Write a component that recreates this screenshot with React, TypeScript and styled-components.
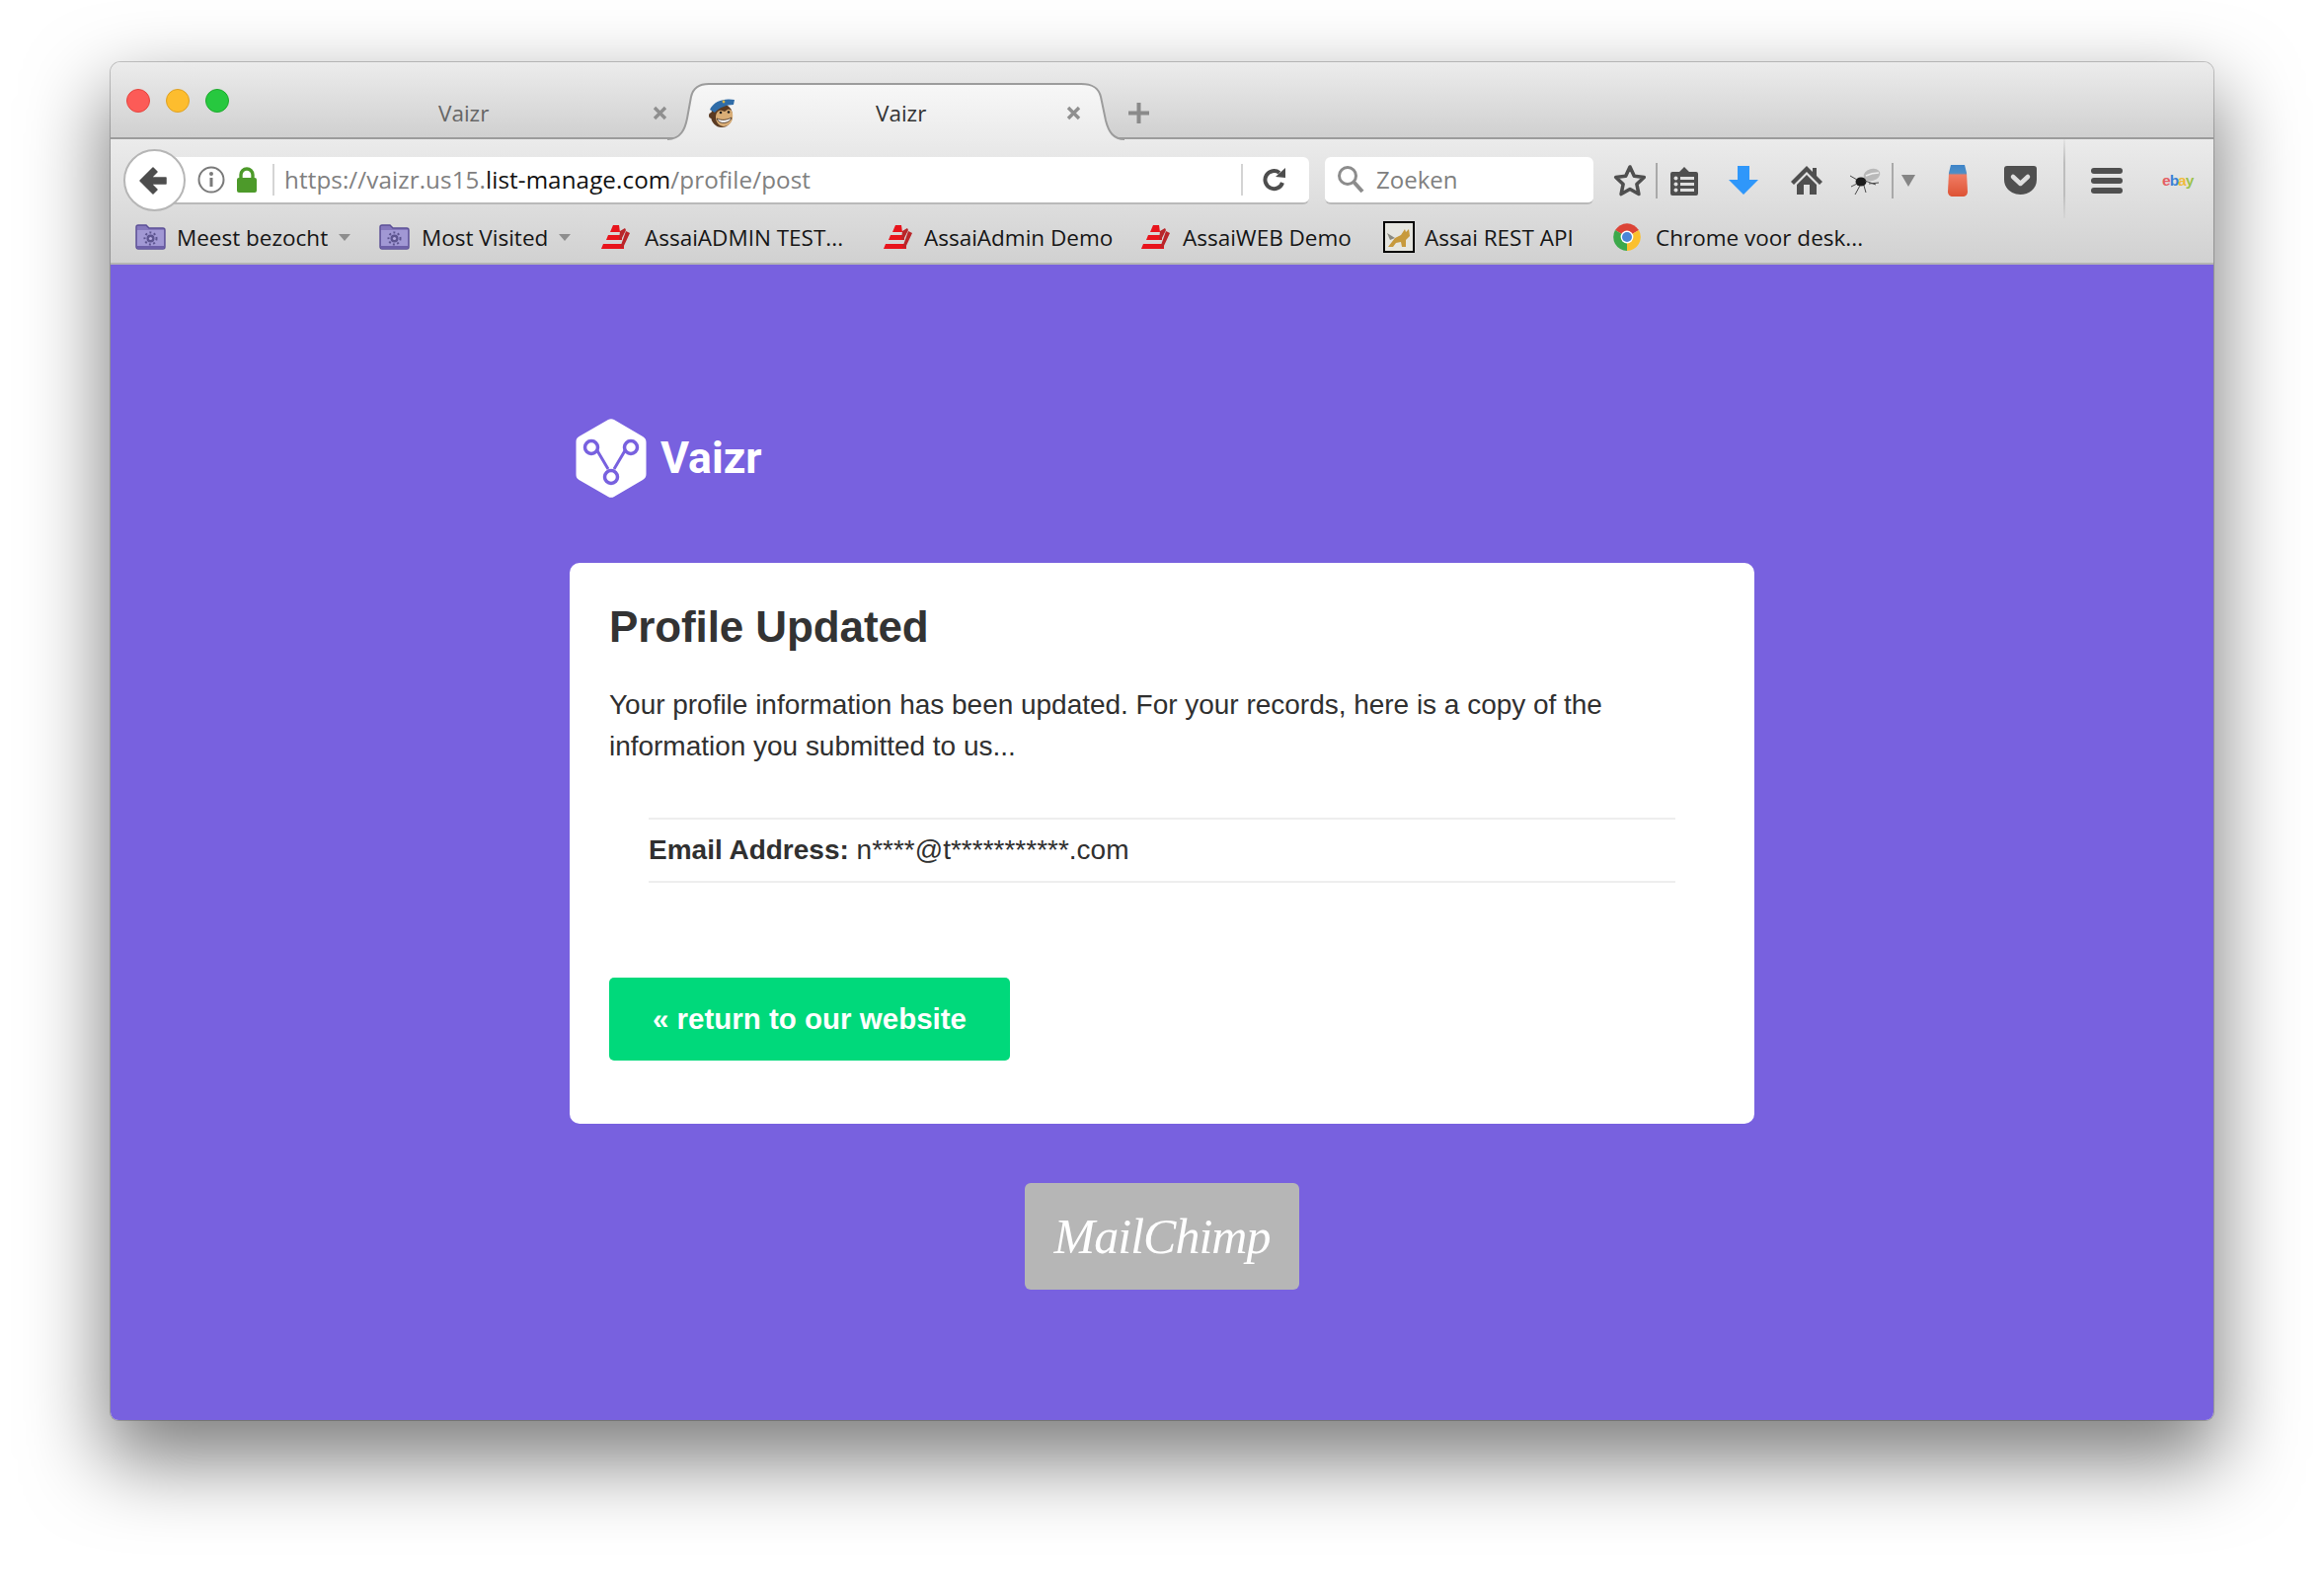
import React from "react";
import styled, { createGlobalStyle } from "styled-components";

const Global = createGlobalStyle`
  html, body { margin: 0; padding: 0; background: #fff; }
  body { font-family: "Liberation Sans", Arial, sans-serif; height: 1598px; overflow: hidden; }
`;

const Stage = styled.div`
  padding: 63px 0 0 112px;
  width: 2354px;
  height: 1598px;
  box-sizing: border-box;
`;
const Win = styled.div`
  width: 2130px;
  height: 1375px;
  display: flex;
  flex-direction: column;
  border-radius: 10px 10px 8px 8px;
  overflow: hidden;
  box-shadow: 0 36px 80px 6px rgba(0, 0, 0, 0.5), 0 0 0 1px rgba(0, 0, 0, 0.2);
`;
const Shell = styled.div`
  position: relative;
`;
const TabStrip = styled.div`
  height: 76px;
  flex: none;
  display: flex;
  align-items: flex-start;
  background: linear-gradient(#ececec, #d0d0d0);
  border-bottom: 2px solid #9c9c9c;
  font-family: "Open Sans", sans-serif;
`;
const Lights = styled.div`
  display: flex;
  gap: 16px;
  margin: 27px 0 0 16px;
  width: 112px;
  flex: none;
`;
const Light = styled.span<{ $c: string; $b: string }>`
  width: 24px;
  height: 24px;
  border-radius: 50%;
  box-sizing: border-box;
  background: ${p => p.$c};
  border: 1px solid ${p => p.$b};
`;
const BackTab = styled.div`
  width: 436px;
  height: 78px;
  flex: none;
  display: flex;
  align-items: center;
  padding-top: 24px;
  box-sizing: border-box;
  font-size: 22.5px;
  color: #666;
`;
const TabTitle = styled.span<{ $ml: number; $w: number }>`
  margin-left: ${p => p.$ml}px;
  width: ${p => p.$w}px;
  flex: none;
  white-space: nowrap;
`;
const FrontTab = styled.div`
  position: relative;
  width: 463px;
  height: 59px;
  margin-top: 21px;
  flex: none;
  display: flex;
  align-items: center;
  padding-top: 2px;
  box-sizing: border-box;
  font-size: 22.5px;
  color: #333;
  z-index: 1;
`;
const TabShape = styled.svg`
  position: absolute;
  left: 0;
  top: 0;
  z-index: -1;
`;
const Plus = styled.svg`
  margin: 41px 0 0 4px;
  flex: none;
`;
const ToolArea = styled.div`
  background: linear-gradient(#ebebeb, #d1d1d1);
  border-bottom: 2px solid #b4b4b4;
  position: relative;
  flex: none;
`;
const NavBar = styled.div`
  height: 69px;
  display: flex;
  align-items: center;
  padding-left: 13px;
  padding-top: 14px;
  box-sizing: border-box;
`;
const BackBtn = styled.div`
  width: 63px;
  height: 63px;
  box-sizing: border-box;
  border-radius: 50%;
  border: 2px solid #b6b6b6;
  background: #fff;
  display: flex;
  align-items: center;
  justify-content: center;
  flex: none;
  position: relative;
  z-index: 1;
`;
const Field = styled.div<{ $w: number; $ml: number }>`
  width: ${p => p.$w}px;
  margin-left: ${p => p.$ml}px;
  height: 48px;
  background: #fff;
  border-radius: 6px;
  border-bottom: 2px solid #b9b9b9;
  box-sizing: border-box;
  display: flex;
  align-items: center;
  flex: none;
  font-family: "Open Sans", sans-serif;
  font-size: 24px;
  color: #808080;
`;
const UrlText = styled.span`
  margin-left: 10px;
  width: 969px;
  flex: none;
  white-space: nowrap;
  font-size: 24.2px;
  letter-spacing: 0.1px;
  b { font-weight: 400; color: #111; }
`;
const Sep = styled.span<{ $h: number; $ml: number; $c?: string }>`
  width: 2px;
  height: ${p => p.$h}px;
  margin-left: ${p => p.$ml}px;
  background: ${p => p.$c || "#d4d4d4"};
  flex: none;
`;
const Ico = styled.svg<{ $ml?: number }>`
  margin-left: ${p => p.$ml || 0}px;
  flex: none;
  display: block;
`;
const BackArrow = styled.svg`
  margin-right: 4px;
  flex: none;
`;
const TallSep = styled.span`
  width: 2px;
  height: 80px;
  margin-left: 27px;
  margin-top: -4px;
  flex: none;
  background: linear-gradient(rgba(170,170,170,.1), #bdbdbd 30%, #bdbdbd 70%, rgba(170,170,170,.1));
`;
const Ebay = styled.span`
  margin-left: 40px;
  font: 700 15.5px "Liberation Sans", sans-serif;
  letter-spacing: -1px;
  flex: none;
  opacity: .75;
`;
const EbayL = styled.span<{ $c: string }>`
  color: ${p => p.$c};
`;
const MarksBar = styled.div`
  height: 56px;
  display: flex;
  align-items: center;
  font-family: "Open Sans", sans-serif;
  font-size: 22.5px;
  color: #161616;
  padding-left: 25px;
  padding-top: 4px;
  box-sizing: border-box;
`;
const MarkText = styled.span<{ $ml: number; $w: number }>`
  margin-left: ${p => p.$ml}px;
  width: ${p => p.$w}px;
  flex: none;
  white-space: nowrap;
`;
const Page = styled.main`
  flex: 1;
  background: #7861df;
  display: flex;
  flex-direction: column;
  align-items: center;
  padding-top: 155px;
`;
const LogoRow = styled.div`
  width: 1188px;
  height: 82px;
  display: flex;
  align-items: center;
  gap: 14px;
  font-family: Roboto, sans-serif;
  font-weight: 700;
  font-size: 44.5px;
  color: #fff;
`;
const Card = styled.section`
  width: 1200px;
  height: 568px;
  margin-top: 65px;
  background: #fff;
  border-radius: 10px;
  padding: 40px 40px 0;
  box-sizing: border-box;
  color: #303030;
`;
const Title = styled.h1`
  margin: 0;
  font-size: 44px;
  line-height: 50px;
  font-weight: 700;
  letter-spacing: -0.1px;
  color: #333;
`;
const Para = styled.p`
  margin: 33px 0 0;
  font-size: 28px;
  line-height: 42px;
  width: 1040px;
  letter-spacing: -0.02px;
`;
const Row = styled.div`
  width: 1040px;
  height: 66px;
  margin: 51px 0 0 40px;
  box-sizing: border-box;
  border-top: 2px solid #eeeeee;
  border-bottom: 2px solid #eeeeee;
  display: flex;
  align-items: center;
  font-size: 28px;
  white-space: pre;
  b { font-weight: 700; }
`;
const Action = styled.a`
  margin-top: 96px;
  width: 406px;
  height: 84px;
  border-radius: 5px;
  background: #00d97b;
  color: #fff;
  font-size: 29.5px;
  font-weight: 700;
  display: flex;
  align-items: center;
  justify-content: center;
`;
const Badge = styled.div`
  margin-top: 60px;
  width: 278px;
  height: 108px;
  border-radius: 6px;
  background: #b6b6b6;
  color: #fff;
  display: flex;
  align-items: center;
  justify-content: center;
  font-family: "Liberation Serif", serif;
  font-style: italic;
  font-size: 50px;
  letter-spacing: -1px;
`;

const Folder = ({ ml = 0 }: { ml?: number }) => (
  <Ico $ml={ml} width="31" height="28" viewBox="0 0 31 28">
    <path d="M1 4a2 2 0 0 1 2-2h8l3 3h14a2 2 0 0 1 2 2v17a2 2 0 0 1-2 2H3a2 2 0 0 1-2-2z" fill="#8578bd" stroke="#5b4f96" strokeWidth="1.4" />
    <rect x="2" y="7" width="27" height="18" fill="#a198d4" />
    <rect x="2" y="23" width="27" height="3" fill="#6d60a8" />
    <circle cx="15.5" cy="15.500" r="4" fill="#5d5590" />
    <circle cx="15.5" cy="15.500" r="6" fill="none" stroke="#5d5590" strokeWidth="2" strokeDasharray="2 2.4" />
    <circle cx="15.5" cy="15.500" r="1.6" fill="#b5abe0" />
  </Ico>
);
const Caret = ({ ml }: { ml: number }) => (
  <Ico $ml={ml} width="12" height="7" viewBox="0 0 12 7"><path d="M0 0h12L6 7z" fill="#8e8e8e" /></Ico>
);
const Assai = ({ ml }: { ml: number }) => (
  <Ico $ml={ml} width="31" height="26" viewBox="0 0 31 26">
    <path d="M12 1h6l1 7H9z" fill="#e8141c" />
    <path d="M7 11h14v5H5z" fill="#e8141c" />
    <path d="M2 20h21v5H0z" fill="#e8141c" />
    <path d="M19 7l5-3 1 2-5 10h-2zM25 7l4 2-7 15h-3z" fill="#b9262a" />
  </Ico>
);
const Tomcat = ({ ml }: { ml: number }) => (
  <Ico $ml={ml} width="32" height="32" viewBox="0 0 32 32">
    <rect x="1" y="1" width="30" height="30" fill="#e6e6e0" stroke="#000" strokeWidth="2" />
    <path d="M5 26l7-9 6-3 4-6 1 3 3-3 1 7-4 4v7h-4l-1-5-5 1-3 4z" fill="#c79a3c" />
    <path d="M4 12l8 5-5 2z" fill="#8a8a80" />
  </Ico>
);
const ChromeIco = ({ ml }: { ml: number }) => (
  <Ico $ml={ml} width="28" height="28" viewBox="0 0 28 28">
    <path d="M14 14L2 7.1A14 14 0 0 1 26 7.1z" fill="#dc4437" />
    <path d="M14 14l12-6.9A14 14 0 0 1 14 28z" fill="#fbc02d" />
    <path d="M14 14v14A14 14 0 0 1 2 7.1z" fill="#3ca94b" />
    <circle cx="14" cy="14" r="6.4" fill="#fff" />
    <circle cx="14" cy="14" r="5" fill="#4a86d8" />
  </Ico>
);
const TabClose = () => (
  <Ico width="15" height="15" viewBox="0 0 15 15"><path d="M2 2l11 11M13 2L2 13" stroke="#8f8f8f" strokeWidth="3.4" /></Ico>
);

export default function App() {
  return (
    <Stage>
      <Global />
      <Win>
        <Shell>
          <TabStrip>
            <Lights>
              <Light $c="#fc5b57" $b="#e5453f" />
              <Light $c="#fdbd2e" $b="#dea123" />
              <Light $c="#27c83f" $b="#1daa2c" />
            </Lights>
            <BackTab>
              <TabTitle $ml={204} $w={217}>Vaizr</TabTitle>
              <TabClose />
            </BackTab>
            <FrontTab>
              <TabShape width="463" height="59" viewBox="0 0 463 59">
                <defs>
                  <linearGradient id="tabfill" x1="0" y1="0" x2="0" y2="1">
                    <stop offset="0" stopColor="#f7f7f7" />
                    <stop offset="1" stopColor="#ebebeb" />
                  </linearGradient>
                </defs>
                <path d="M0 59V57C14 57 18 46 20 36L24 14C26 5 32 1 42 1H419C432 1 437 6 439 14L444 38C447 50 452 57 463 57V59z" fill="url(#tabfill)" />
                <path d="M0 57C14 57 18 46 20 36L24 14C26 5 32 1 42 1H419C432 1 437 6 439 14L444 38C447 50 452 57 463 57" fill="none" stroke="#9c9c9c" strokeWidth="2" />
              </TabShape>
              <Ico $ml={42} width="28" height="31" viewBox="0 0 28 31">
                <ellipse cx="13" cy="18" rx="11" ry="12" fill="#5a3a22" />
                <circle cx="3" cy="18" r="3" fill="#5a3a22" />
                <path d="M1 12C5 3 16 0 26 2L25 7C18 7 10 10 6 15z" fill="#2f6ca8" />
                <circle cx="15" cy="4" r="1.4" fill="#d8b84a" />
                <path d="M7 20c0-5 3-8 6-7l3 1 3-2c4-1 6 3 5 9-1 5-5 8-9 8s-8-4-8-9z" fill="#d9ad76" />
                <circle cx="12" cy="15" r="1.3" fill="#1c1c1c" />
                <circle cx="20" cy="14.500" r="1.3" fill="#1c1c1c" />
                <path d="M8 21c4 2 10 2 15-1-1 6-13 8-15 1z" fill="#fff" stroke="#3a2415" strokeWidth=".8" />
              </Ico>
              <TabTitle $ml={141} $w={193}>Vaizr</TabTitle>
              <TabClose />
            </FrontTab>
            <Plus width="21" height="21" viewBox="0 0 21 21"><path d="M8.5 0h4v8.500h8.500v4h-8.500v8.500h-4v-8.500H0v-4h8.500z" fill="#8a8a8a" /></Plus>
          </TabStrip>
          <ToolArea>
            <NavBar>
              <BackBtn>
                <BackArrow width="30" height="30" viewBox="0 0 30 30"><path d="M15 2L2 15l13 13 4-4-6-6h15v-6H13l6-6z" fill="#4d4d4d" stroke="#4d4d4d" strokeWidth="1.500" strokeLinejoin="round" /></BackArrow>
              </BackBtn>
              <Field $w={1158} $ml={-20}>
                <Ico $ml={32} width="28" height="28" viewBox="0 0 28 28">
                  <circle cx="14" cy="14" r="12.500" fill="none" stroke="#7a7a7a" strokeWidth="2" />
                  <circle cx="14" cy="8" r="2" fill="#7a7a7a" />
                  <rect x="12.500" y="12" width="3" height="9" fill="#7a7a7a" />
                </Ico>
                <Ico $ml={11} width="22" height="26" viewBox="0 0 22 26">
                  <path d="M5 12V8a6 6 0 0 1 12 0v4" fill="none" stroke="#4d9a2a" strokeWidth="3.400" />
                  <rect x="1" y="11" width="20" height="15" rx="2" fill="#4d9a2a" />
                </Ico>
                <Sep $h={32} $ml={15} />
                <UrlText>https://vaizr.us15.<b>list-manage.com</b>/profile/post</UrlText>
                <Sep $h={32} $ml={0} />
                <Ico $ml={20} width="24" height="26" viewBox="0 0 24 26">
                  <path d="M20 16a9 9 0 1 1-3-10" fill="none" stroke="#4d4d4d" strokeWidth="4" />
                  <path d="M13 10L23 1v10z" fill="#4d4d4d" />
                </Ico>
              </Field>
              <Field $w={272} $ml={16}>
                <Ico $ml={12} width="28" height="30" viewBox="0 0 28 30">
                  <circle cx="11" cy="11" r="8.500" fill="none" stroke="#8c8c8c" strokeWidth="3" />
                  <path d="M17 17l9 10" stroke="#8c8c8c" strokeWidth="4" />
                </Ico>
                <TabTitle $ml={12} $w={120}>Zoeken</TabTitle>
              </Field>
              <Ico $ml={20} width="34" height="34" viewBox="0 0 34 34">
                <path d="M17 3l4.300 9.300 10 1.200-7.400 7 2 10L17 25.500 8.100 30.500l2-10-7.400-7 10-1.200z" fill="none" stroke="#4f4f4f" strokeWidth="3.600" strokeLinejoin="round" />
              </Ico>
              <Sep $h={36} $ml={9} $c="#a9a9a9" />
              <Ico $ml={13} width="28" height="30" viewBox="0 0 28 30">
                <path d="M2 6h7l5-5 5 5h7a2 2 0 0 1 2 2v20a2 2 0 0 1-2 2H2a2 2 0 0 1-2-2V8a2 2 0 0 1 2-2z" fill="#4f4f4f" />
                <path d="M10 11h14v3H10zM10 17h14v3H10zM10 23h14v3H10z" fill="#e0e0e0" />
                <circle cx="5.500" cy="12.500" r="2" fill="#e0e0e0" /><circle cx="5.500" cy="18.500" r="2" fill="#e0e0e0" /><circle cx="5.500" cy="24.500" r="2" fill="#e0e0e0" />
              </Ico>
              <Ico $ml={31} width="30" height="29" viewBox="0 0 30 29"><path d="M9 0h12v14h9L15 29 0 14h9z" fill="#2f97fa" /></Ico>
              <Ico $ml={33} width="32" height="29" viewBox="0 0 32 29"><path d="M16 0L0 16l3 3L16 6l13 13 3-3-6-6V2h-4v4zM6 19L16 9l10 10v10h-7V19h-6v10H6z" fill="#4f4f4f" /></Ico>
              <Ico $ml={28} width="32" height="36" viewBox="0 0 32 36">
                <ellipse cx="22" cy="12" rx="8.500" ry="6" fill="#b9b9b9" transform="rotate(-15 22 12)" />
                <path d="M16 13c4-2 8-3 13-3" stroke="#eeeeee" strokeWidth="1.500" fill="none" />
                <ellipse cx="11" cy="19" rx="5.500" ry="4.500" fill="#1c1c1c" />
                <path d="M7 17L0 13M7 21L1 24M10 23L5 32M14 23l2 7M15 18l11 4M19 21l10-1" stroke="#4a4a4a" strokeWidth="1" fill="none" />
              </Ico>
              <Sep $h={36} $ml={10} $c="#a9a9a9" />
              <Ico $ml={8} width="14" height="12" viewBox="0 0 14 12"><path d="M0 0h14L7 12z" fill="#858585" /></Ico>
              <Ico $ml={32} width="22" height="32" viewBox="0 0 22 32">
                <defs>
                  <linearGradient id="jar" x1="0" y1="0" x2="0" y2="1">
                    <stop offset="0" stopColor="#3d83c8" /><stop offset=".26" stopColor="#4e8fc6" />
                    <stop offset=".32" stopColor="#f07c63" /><stop offset="1" stopColor="#dd5234" />
                  </linearGradient>
                </defs>
                <path d="M4 0h14l2 8 1 19c0 3-2 5-5 5H6c-3 0-5-2-5-5L2 8z" fill="url(#jar)" />
              </Ico>
              <Ico $ml={36} width="33" height="29" viewBox="0 0 33 29">
                <path d="M3 0h27a3 3 0 0 1 3 3v11C33 23 25 29 16.500 29S0 23 0 14V3a3 3 0 0 1 3-3z" fill="#4f4f4f" />
                <path d="M9 11l7.500 7L24 11" fill="none" stroke="#dedede" strokeWidth="4.500" strokeLinecap="round" strokeLinejoin="round" />
              </Ico>
              <TallSep />
              <Ico $ml={26} width="32" height="26" viewBox="0 0 32 26">
                <rect width="32" height="6" y="0" rx="3" fill="#4f4f4f" />
                <rect width="32" height="6" y="10" rx="3" fill="#4f4f4f" />
                <rect width="32" height="6" y="20" rx="3" fill="#4f4f4f" />
              </Ico>
              <Ebay>
                <EbayL $c="#e53238">e</EbayL><EbayL $c="#0064d2">b</EbayL><EbayL $c="#f5af02">a</EbayL><EbayL $c="#86b817">y</EbayL>
              </Ebay>
            </NavBar>
            <MarksBar>
              <Folder />
              <MarkText $ml={11} $w={154}>Meest bezocht</MarkText>
              <Caret ml={10} />
              <Folder ml={29} />
              <MarkText $ml={12} $w={135}>Most Visited</MarkText>
              <Caret ml={4} />
              <Assai ml={31} />
              <MarkText $ml={13} $w={206}>AssaiADMIN TEST...</MarkText>
              <Assai ml={36} />
              <MarkText $ml={10} $w={190}>AssaiAdmin Demo</MarkText>
              <Assai ml={30} />
              <MarkText $ml={11} $w={172}>AssaiWEB Demo</MarkText>
              <Tomcat ml={31} />
              <MarkText $ml={10} $w={158}>Assai REST API</MarkText>
              <ChromeIco ml={33} />
              <MarkText $ml={15} $w={215}>Chrome voor desk...</MarkText>
            </MarksBar>
          </ToolArea>
        </Shell>
        <Page>
          <LogoRow>
            <Ico width="72" height="82" viewBox="0 0 72 82">
              <path d="M33 2a6 6 0 0 1 6 0l29 17c2.500 1.500 3.500 3 3.500 6v32c0 3-1 4.500-3.500 6L39 80a6 6 0 0 1-6 0L3.500 63C1 61.500.5 60 .5 57V25c0-3 .5-4.500 3-6z" fill="#fff" />
              <path d="M20 30l13 22M52 30L39 52" stroke="#7861df" strokeWidth="3" />
              <circle cx="16" cy="30" r="6.500" fill="#fff" stroke="#7861df" strokeWidth="3.500" />
              <circle cx="56" cy="30" r="6.500" fill="#fff" stroke="#7861df" strokeWidth="3.500" />
              <circle cx="36" cy="60" r="6.500" fill="#fff" stroke="#7861df" strokeWidth="3.500" />
            </Ico>
            Vaizr
          </LogoRow>
          <Card>
            <Title>Profile Updated</Title>
            <Para>Your profile information has been updated. For your records, here is a copy of the information you submitted to us...</Para>
            <Row><b>Email Address:</b> n****@t***********.com</Row>
            <Action>« return to our website</Action>
          </Card>
          <Badge>MailChimp</Badge>
        </Page>
      </Win>
    </Stage>
  );
}
